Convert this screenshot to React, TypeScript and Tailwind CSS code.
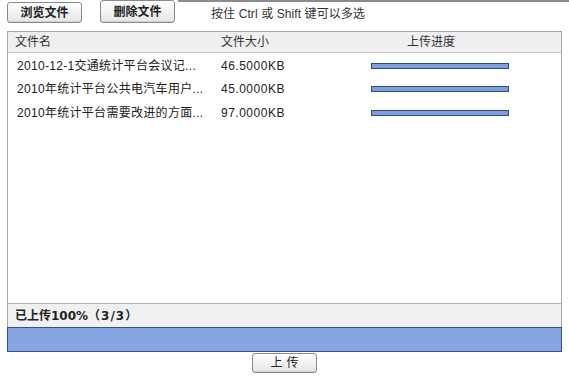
import React from "react";

const files = [
  { name: "2010-12-1交通统计平台会议记...", size: "46.5000KB" },
  { name: "2010年统计平台公共电汽车用户...", size: "45.0000KB" },
  { name: "2010年统计平台需要改进的方面...", size: "97.0000KB" },
];

const font = "font-['Liberation_Sans','Noto_Sans_CJK_SC',sans-serif]";
const btn =
  "flex items-center justify-center border border-[#8a8a8a] rounded-[3px] bg-gradient-to-b from-white to-[#e6e6e6] text-[12px] text-[#222] shadow-[inset_0_-1px_0_#d0d0d0]";

export default function App() {
  return (
    <div className={`relative w-[569px] h-[377px] bg-white text-[#222] text-[12px] leading-none ${font}`}>
      <div className="absolute top-0 left-[178px] right-0 h-[2px] bg-[#8c8c8c]" />

      {/* toolbar */}
      <div className="flex h-[31px]">
        <button className={`${btn} ml-[7px] mt-[2px] w-[75px] h-[21px] font-bold`}>浏览文件</button>
        <button className={`${btn} ml-[18px] mt-0 w-[75px] h-[23px] font-bold`}>删除文件</button>
        <span className="ml-[36px] mt-[8px] text-[12px] text-[#333] tracking-[0.1px]">按住 Ctrl 或 Shift 键可以多选</span>
      </div>

      {/* file list panel */}
      <div className="mx-[7px] h-[297px] border border-[#a8a8a8] flex flex-col">
        <div className="h-[21px] flex items-center bg-[#efefef] border-b border-[#c4c4c4] text-[#333] shrink-0">
          <div className="w-[213px] pl-[7px]">文件名</div>
          <div className="w-[147px]">文件大小</div>
          <div className="pl-[39px]">上传进度</div>
        </div>
        <div className="flex-1 bg-white pt-[1px]">
          {files.map((f) => (
            <div key={f.name} className="h-[23.5px] flex items-center text-[#222]">
              <div className="w-[213px] pl-[9px] whitespace-nowrap tracking-[0.3px]">{f.name}</div>
              <div className="w-[147px] tracking-[0.5px]">{f.size}</div>
              <div className="ml-[3px] w-[138px] h-[6px] bg-[#7f9ede] border border-[#2f4b7c]" />
            </div>
          ))}
        </div>
        <div className="h-[24px] flex items-center bg-[#f0f0f0] border-t border-[#b4b4b4] pl-[7px] font-bold text-[#222] shrink-0 font-['DejaVu_Sans','Noto_Sans_CJK_SC',sans-serif]">
          已上传100%<span className="tracking-[1px]">（3/3）</span>
        </div>
      </div>
      <div className="mx-[7px] -mt-px h-[25px] bg-[#86a5e1] border border-[#33508f]" />

      <div className="flex justify-center mt-[1px]">
        <button className={`${btn} w-[65px] h-[20px] tracking-[4px] pl-[4px]`}>上传</button>
      </div>
    </div>
  );
}
